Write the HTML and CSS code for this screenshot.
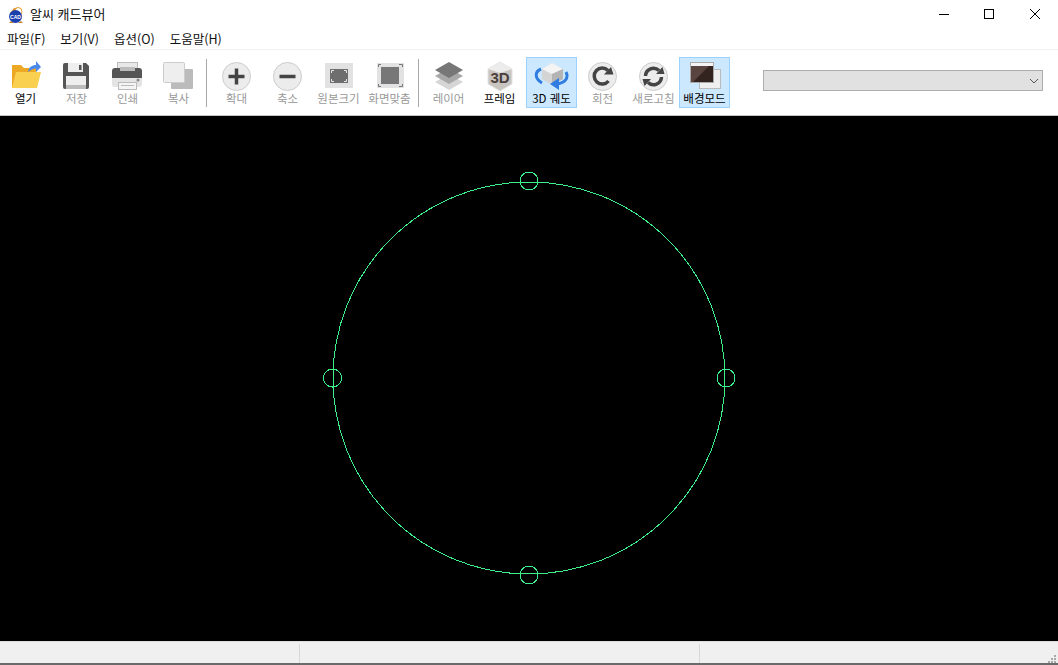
FILE: index.html
```html
<!DOCTYPE html>
<html lang="ko">
<head>
    <meta charset="UTF-8">
    <title>알씨 캐드뷰어</title>
    <link rel="stylesheet" href="styles.css">
</head>
<body>
    <div class="window">
        <div class="titlebar">
            <svg class="app-icon" viewBox="0 0 16 16">
                <path d="M3 14 L1 16 H6 Z M13 14 L15 16 H10 Z" fill="#c9842a"/>
                <circle cx="10" cy="4.500" r="4" fill="#fff" stroke="#e09a30"/>
                <path d="M2 6 L6 1 H9 L5 6 Z" fill="#e09a30"/>
                <circle cx="7.500" cy="9.500" r="6.500" fill="#1c3fae"/>
                <text x="7.500" y="11.500" class="app-icon-text">CAD</text>
            </svg>
            <span class="title-text">알씨 캐드뷰어</span>
            <div class="window-btns">
                <svg class="win-btn" viewBox="0 0 46 30"><path d="M19 14.500 H29" stroke="#000" fill="none"/></svg>
                <svg class="win-btn" viewBox="0 0 46 30"><rect x="18.500" y="9.500" width="9" height="9" stroke="#000" fill="none"/></svg>
                <svg class="win-btn" viewBox="0 0 46 30"><path d="M18 9 L28 19 M28 9 L18 19" stroke="#000" fill="none"/></svg>
            </div>
        </div>

        <div class="menubar">
            <span class="menu-item">파일(F)</span>
            <span class="menu-item">보기(V)</span>
            <span class="menu-item">옵션(O)</span>
            <span class="menu-item">도움말(H)</span>
        </div>

        <div class="toolbar">
            <div class="tool on">
                <svg class="tool-icon" viewBox="0 0 51 32">
                    <path d="M12 6 H21 L24 9 H36 V29 H12 Z" fill="#eda825"/>
                    <path d="M16 13 H41 L37 29 H12 Z" fill="#fad050"/>
                    <path d="M28 13 C29 8 32 6 36 6 V2 L41 8 L36 13 V9.500 C33 9.500 31 11 28 13 Z" fill="#4a88ea"/>
                </svg>
                <span class="tool-label">열기</span>
            </div>
            <div class="tool">
                <svg class="tool-icon" viewBox="0 0 51 32">
                    <path d="M12 6 Q12 4 14 4 H35 L38 7 V28 Q38 30 36 30 H14 Q12 30 12 28 Z" fill="#555"/>
                    <rect x="17" y="4" width="15" height="9" fill="#eee"/>
                    <rect x="28" y="6" width="2.500" height="5" fill="#555"/>
                    <rect x="15" y="17" width="20" height="13" fill="#eee"/>
                    <rect x="15" y="26" width="20" height="4" fill="#bbb"/>
                </svg>
                <span class="tool-label">저장</span>
            </div>
            <div class="tool">
                <svg class="tool-icon" viewBox="0 0 51 32">
                    <rect x="15.500" y="3.500" width="20" height="8" fill="#e8e8e8" stroke="#bbb"/>
                    <path d="M10 12 Q10 9 13 9 H37 Q40 9 40 12 V19 H10 Z" fill="#555"/>
                    <rect x="18" y="8" width="15" height="4" fill="#bbb"/>
                    <path d="M10 19 H40 V25 Q40 28 37 28 H13 Q10 28 10 25 Z" fill="#e4e4e4"/>
                    <circle cx="36" cy="21" r="1.500" fill="#888"/>
                    <rect x="16.500" y="23.500" width="18" height="7" fill="#f4f4f4" stroke="#bbb"/>
                    <rect x="19" y="26" width="13" height="1" fill="#bbb"/>
                </svg>
                <span class="tool-label">인쇄</span>
            </div>
            <div class="tool">
                <svg class="tool-icon" viewBox="0 0 51 32">
                    <rect x="18" y="10" width="22" height="20" rx="1" fill="#bbb"/>
                    <rect x="10.500" y="3.500" width="21" height="20" rx="1" fill="#eee" stroke="#ccc"/>
                </svg>
                <span class="tool-label">복사</span>
            </div>

            <div class="tool-sep"></div>

            <div class="tool">
                <svg class="tool-icon" viewBox="0 0 51 32">
                    <circle cx="25.500" cy="17.500" r="14" fill="#ececec" stroke="#ccc"/>
                    <path d="M17.500 17.500 H33.500 M25.500 9.500 V25.500" stroke="#444" stroke-width="3.500" fill="none"/>
                </svg>
                <span class="tool-label">확대</span>
            </div>
            <div class="tool">
                <svg class="tool-icon" viewBox="0 0 51 32">
                    <circle cx="25.500" cy="17.500" r="14" fill="#ececec" stroke="#ccc"/>
                    <path d="M17.500 17.500 H33.500" stroke="#444" stroke-width="3.500" fill="none"/>
                </svg>
                <span class="tool-label">축소</span>
            </div>
            <div class="tool">
                <svg class="tool-icon" viewBox="0 0 51 32">
                    <rect x="12" y="4" width="28" height="25" fill="#e2e2e2"/>
                    <rect x="17" y="10" width="18" height="14" fill="#6e6e6e"/>
                    <path d="M18.500 14 V11.500 H21 M31 11.500 H33.500 V14 M33.500 20 V22.500 H31 M21 22.500 H18.500 V20" stroke="#e8e8e8" fill="none"/>
                </svg>
                <span class="tool-label">원본크기</span>
            </div>
            <div class="tool">
                <svg class="tool-icon" viewBox="0 0 51 32">
                    <rect x="13" y="4" width="27" height="25" fill="#e2e2e2"/>
                    <rect x="17" y="8" width="18" height="17" fill="#777"/>
                    <path d="M14.500 8 V5.500 H17 M35 5.500 H38.500 V8 M38.500 25 V27.500 H35 M17 27.500 H14.500 V25" stroke="#777" fill="none"/>
                </svg>
                <span class="tool-label">화면맞춤</span>
            </div>

            <div class="tool-sep second"></div>

            <div class="tool">
                <svg class="tool-icon" viewBox="0 0 51 32">
                    <path d="M26 15 L40 23 L26 31 L12 23 Z" fill="#d6d6d6"/>
                    <path d="M26 9 L40 17 L26 25 L12 17 Z" fill="#a8a8a8"/>
                    <path d="M26 3 L40 11 L26 19 L12 11 Z" fill="#777"/>
                </svg>
                <span class="tool-label">레이어</span>
            </div>
            <div class="tool on">
                <svg class="tool-icon" viewBox="0 0 51 32">
                    <path d="M26 3 L38 10 V25 L26 32 L14 25 V10 Z" fill="#c8c4c0" stroke="#e4e4e4"/>
                    <path d="M26 3 L38 10 L26 14 L14 10 Z" fill="#ececec"/>
                    <text x="26" y="24" class="icon-3d">3D</text>
                </svg>
                <span class="tool-label">프레임</span>
            </div>
            <div class="tool on active orbit">
                <svg class="tool-icon" viewBox="0 0 51 32">
                    <path d="M26 4 L37 10 V20 L26 26 L16 20 V10 Z" fill="#d4d4d4"/>
                    <path d="M26 4 L37 10 L26 15 L16 10 Z" fill="#f4f4f4"/>
                    <path d="M26 15 L37 10 V20 L26 26 Z" fill="#b4b4b4"/>
                    <path d="M15 10 C8 13 9 20 16 24" stroke="#2f7de0" stroke-width="3" fill="none"/>
                    <path d="M40 13 C43 19 39 24 31 25" stroke="#2f7de0" stroke-width="3" fill="none"/>
                    <path d="M24 25 L33 19 V31 Z" fill="#2f7de0"/>
                </svg>
                <span class="tool-label">3D 궤도</span>
            </div>
            <div class="tool">
                <svg class="tool-icon" viewBox="0 0 51 32">
                    <circle cx="25.500" cy="17.500" r="14" fill="#ececec" stroke="#ccc"/>
                    <path d="M31.500 22 A8 8 0 1 1 31 11.500" stroke="#444" stroke-width="3.500" fill="none"/>
                    <path d="M27 15.500 H36.500 L34 8 Z" fill="#444"/>
                </svg>
                <span class="tool-label">회전</span>
            </div>
            <div class="tool">
                <svg class="tool-icon" viewBox="0 0 51 32">
                    <circle cx="25.500" cy="17.500" r="14" fill="#ececec" stroke="#ccc"/>
                    <path d="M17.500 17 A8 8 0 0 1 31 11.500" stroke="#444" stroke-width="3.500" fill="none"/>
                    <path d="M33.500 18 A8 8 0 0 1 20 23.500" stroke="#444" stroke-width="3.500" fill="none"/>
                    <path d="M28 15 H36.500 L34.500 8 Z M23 20 H14.500 L16.500 27 Z" fill="#444"/>
                </svg>
                <span class="tool-label">새로고침</span>
            </div>
            <div class="tool on active">
                <svg class="tool-icon" viewBox="0 0 51 32">
                    <rect x="20.500" y="10.500" width="21" height="19" fill="#efefef" stroke="#bbb"/>
                    <rect x="11.500" y="3.500" width="23" height="20" fill="#f4f4f4" stroke="#aaa"/>
                    <path d="M12 7 H34 V23 H12 Z" fill="#33241f"/>
                    <path d="M12 7 H30 L14 23 H12 Z" fill="#5a4440"/>
                </svg>
                <span class="tool-label">배경모드</span>
            </div>

            <div class="layer-select">
                <svg class="select-arrow" viewBox="0 0 10 6"><path d="M1 1 L5 5 L9 1" stroke="#555" fill="none"/></svg>
            </div>
        </div>

        <svg class="drawing" viewBox="0 0 1058 525">
            <g stroke="#3ef08c" fill="none" shape-rendering="crispEdges">
                <circle cx="529" cy="262" r="196"/>
                <circle cx="529" cy="65" r="9"/>
                <circle cx="529" cy="459" r="9"/>
                <circle cx="332.500" cy="262" r="9"/>
                <circle cx="726" cy="262" r="9"/>
            </g>
        </svg>

        <div class="statusbar">
            <div class="status-pane first"></div>
            <div class="status-pane second"></div>
            <div class="status-pane last">
                <svg class="grip" viewBox="0 0 9 9">
                    <path d="M7 1 h2 v2 h-2 z M4 4 h2 v2 h-2 z M7 4 h2 v2 h-2 z M1 7 h2 v2 h-2 z M4 7 h2 v2 h-2 z M7 7 h2 v2 h-2 z" fill="#a8a8a8"/>
                </svg>
            </div>
        </div>
        <div class="desktop-edge"></div>
    </div>
</body>
</html>
```

FILE: styles.css
```css
html, body {
    margin: 0;
    height: 100%;
    overflow: hidden;
    background: white;
}
.window {
    display: flex;
    flex-direction: column;
    height: 665px;
    font-family: "Noto Sans CJK KR", "Noto Sans", sans-serif;
    font-size: 12px;
    color: #111;
}
.titlebar {
    display: flex;
    align-items: center;
    height: 30px;
    padding-left: 8px;
}
.app-icon {
    width: 16px;
    height: 16px;
}
.app-icon-text {
    font-family: "Liberation Sans", sans-serif;
    font-size: 5px;
    font-weight: bold;
    fill: white;
    text-anchor: middle;
}
.title-text {
    margin-left: 6px;
    font-size: 13px;
    line-height: 28px;
    height: 30px;
}
.window-btns {
    display: flex;
    margin-left: auto;
}
.win-btn {
    display: block;
    width: 46px;
    height: 30px;
}
.menubar {
    display: flex;
    height: 19px;
    padding-left: 7px;
    gap: 15px;
    font-size: 12.500px;
    border-bottom: 1px solid #f0f0f0;
}
.menu-item {
    line-height: 18px;
}
.toolbar {
    display: flex;
    align-items: flex-start;
    height: 58px;
    padding-top: 7px;
    border-bottom: 1px solid #c4c4c4;
}
.tool {
    display: flex;
    flex-direction: column;
    align-items: center;
    flex: none;
    width: 51px;
    height: 51px;
    box-sizing: border-box;
    color: #999;
}
.tool.on {
    color: #000;
}
.tool.active {
    background: #cce8ff;
    box-shadow: inset 0 0 0 1px #99d1ff;
}
.tool.orbit {
    margin-left: 1px;
}
.tool-icon {
    display: block;
    flex: none;
    width: 51px;
    height: 32px;
    margin-top: 2px;
}
.tool-label {
    font-size: 11.500px;
    line-height: 15px;
    white-space: nowrap;
}
.icon-3d {
    font-family: "Liberation Sans", sans-serif;
    font-size: 15px;
    font-weight: bold;
    fill: #4a3f3c;
    text-anchor: middle;
}
.tool-sep {
    flex: none;
    width: 1px;
    height: 48px;
    margin: 2px 4px 0 2px;
    background: #a8a8a8;
}
.tool-sep.second {
    margin: 2px 4px 0 3px;
}
.layer-select {
    display: flex;
    align-items: center;
    justify-content: flex-end;
    width: 278px;
    height: 19px;
    margin: 13px 0 0 33px;
    background: #e1e1e1;
    border: 1px solid #adadad;
}
.select-arrow {
    width: 10px;
    height: 6px;
    margin-right: 3px;
}
.drawing {
    display: block;
    flex: none;
    width: 1058px;
    height: 525px;
    background: black;
}
.statusbar {
    display: flex;
    flex: none;
    height: 22px;
    box-sizing: border-box;
    padding-top: 2px;
    background: #f0f0f0;
    border-top: 1px solid #dcdcdc;
}
.status-pane {
    box-sizing: border-box;
    height: 19px;
}
.status-pane.first {
    width: 300px;
    border-right: 1px solid #d8d8d8;
}
.status-pane.second {
    width: 400px;
    border-right: 1px solid #d8d8d8;
}
.status-pane.last {
    display: flex;
    flex: 1;
    align-items: flex-end;
    justify-content: flex-end;
}
.grip {
    width: 9px;
    height: 9px;
    margin-right: 2px;
}
.desktop-edge {
    flex: none;
    height: 2px;
    background: #6a6a6a;
}
```
